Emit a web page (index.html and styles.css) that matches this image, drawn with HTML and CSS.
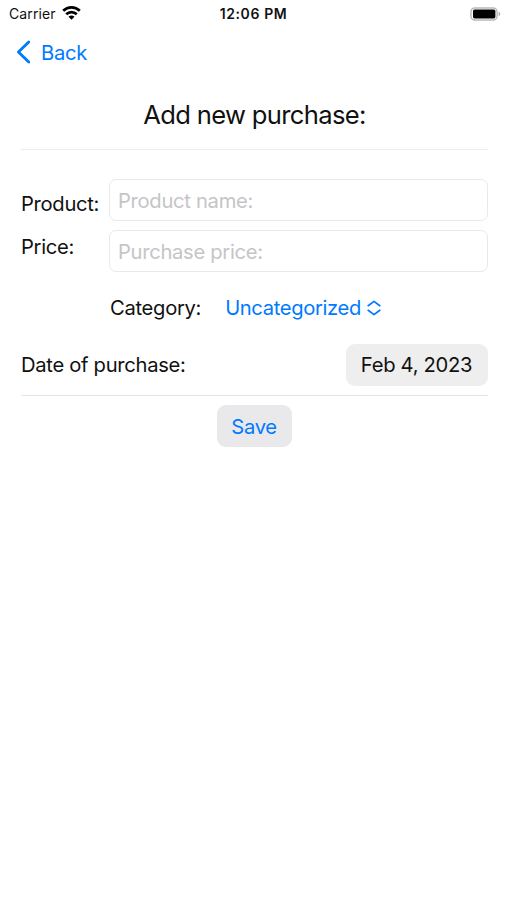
FILE: index.html
```html
<!DOCTYPE html>
<html lang="en">
<head>
<meta charset="utf-8">
<meta name="viewport" content="width=device-width, initial-scale=1">
<title>Add new purchase</title>
<link rel="stylesheet" href="styles.css">
</head>
<body>
<header class="status">
  <div class="carrier"><span>Carrier</span>
    <svg width="19" height="15" viewBox="0 0 19 15" fill="none" stroke="#000" stroke-width="2.7"><path d="M1.2 5.8C5.8 1.1 13.2 1.1 17.8 5.8"/><path d="M4.2 9.3c3-3 7.6-3 10.6 0"/><path d="M9.5 14.8 6.5 11.7c1.7-1.5 4.3-1.5 6 0z" fill="#000" stroke="none"/></svg>
  </div>
  <div class="time">12:06 PM</div>
  <svg class="battery" width="31" height="14" viewBox="0 0 31 14"><rect x=".9" y=".9" width="26.2" height="12.2" rx="4" fill="#fff" stroke="#b9b9b9" stroke-width="1.5"/><rect x="3" y="2.6" width="22.4" height="8.8" rx="1.6"/><path d="M28.7 4.8c2 .7 2 3.7 0 4.4z" fill="#aaa"/></svg>
</header>
<nav class="nav">
  <a class="back"><svg width="15" height="24" viewBox="0 0 15 24" fill="none" stroke="#007aff" stroke-width="2.8" stroke-linecap="round" stroke-linejoin="round"><path d="M12.8 2 2.4 12l10.4 10"/></svg><span>Back</span></a>
</nav>
<main>
  <h1><span>Add new purchase:</span></h1>
  <form class="form">
    <div class="fields">
      <div class="labels"><label for="name" class="l-product">Product:</label><label for="price" class="l-price">Price:</label></div>
      <div class="inputs"><input id="name" class="i-name" placeholder="Product name:"><input id="price" class="i-price" placeholder="Purchase price:"></div>
    </div>
    <div class="category"><span class="cat-label">Category:</span><span class="picker">Uncategorized</span>
      <svg width="14" height="16" viewBox="0 0 14 16" fill="none" stroke="#007aff" stroke-width="1.7" stroke-linecap="round" stroke-linejoin="round"><path d="M1.2 5.7 7 1.4l5.8 4.3M1.2 10.3 7 14.6l5.8-4.3"/></svg>
    </div>
    <div class="date-row"><span class="date-label">Date of purchase:</span><button type="button" class="date"><span>Feb 4, 2023</span></button></div>
    <div class="actions"><button type="button" class="save"><span>Save</span></button></div>
  </form>
</main>
</body>
</html>
```
FILE: styles.css
```css
* { box-sizing: border-box; }
body {
  margin: 0;
  min-height: 900px;
  background: #fff;
  color: #111;
  font: 400 20.2px/26px Inter, "Liberation Sans", sans-serif;
  letter-spacing: -0.3px;
  white-space: nowrap;
}
svg { display: block; flex: none; }
button, input { font: inherit; letter-spacing: inherit; color: inherit; }
.status {
  display: grid;
  grid-template-columns: 1fr auto 1fr;
  align-items: center;
  height: 27px;
  padding: 0 6px 0 9px;
  font-size: 14px;
  line-height: 18px;
  letter-spacing: 0.1px;
}
.carrier { display: flex; align-items: center; gap: 6px; }
.carrier svg { margin-top: -3px; }
.time { margin-right: 3px; font-weight: 600; letter-spacing: 0.6px; }
.battery { justify-self: end; }
.nav { height: 50px; padding: 13px 0 0 16px; }
.back { display: inline-flex; align-items: center; gap: 10px; color: #007aff; }
.back svg { margin-top: -2px; }
main { padding: 0 19px 0 21px; }
h1 {
  height: 73px;
  margin: 0;
  padding-top: 22px;
  border-bottom: 1px solid #ececec;
  font-size: 25.6px;
  line-height: 32px;
  font-weight: 400;
  letter-spacing: -0.68px;
  text-align: center;
}
.form { display: flex; flex-direction: column; }
.fields { display: flex; padding-top: 29px; }
.labels { display: flex; flex-direction: column; gap: 17px; width: 88px; padding-top: 12px; }
.inputs { display: flex; flex-direction: column; gap: 9px; flex: 1; }
.labels label { width: max-content; }
input {
  width: 100%;
  height: 42px;
  padding: 0 8px;
  border: 1px solid #e9e9e9;
  border-radius: 7px;
  background: #fff;
  outline: none;
}
input::placeholder { color: #c5c5c7; opacity: 1; }
.category { display: flex; align-items: center; height: 72px; padding-left: 89px; }
.picker { margin-left: 24px; margin-right: 6px; letter-spacing: -0.35px; color: #007aff; }
.category svg { margin-top: -1px; }
.date-row { display: flex; align-items: center; justify-content: space-between; height: 52px; padding-bottom: 10px; border-bottom: 1px solid #e4e4e4; }
.date, .save { height: 42px; padding: 0; border: 0; border-radius: 9px; }
.date { width: 142px; padding-right: 1px; background: #eeeeef; }
.actions { display: flex; justify-content: center; padding-top: 9px; }
.save { width: 75px; padding: 2px 1px 0 0; background: #e9e9eb; color: #007aff; }
```
